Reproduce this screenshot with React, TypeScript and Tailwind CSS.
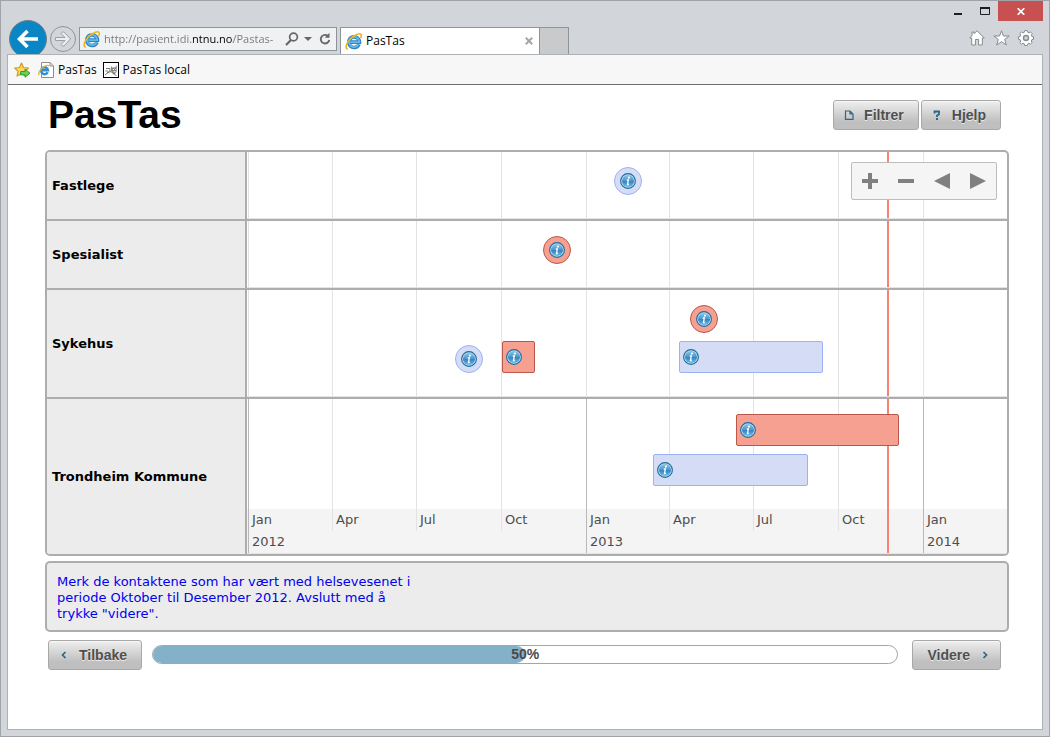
import React from 'react';

type Tone = 'blue' | 'red';

interface TimelineEvent {
  tone: Tone;
  start: number;
  // Events without a length are drawn as round markers
  length?: number;
  top: number;
}

interface TimelineLane {
  name: string;
  height: string;
  events: TimelineEvent[];
  hasAxis?: boolean;
}

// Horizontal values are given on a scale of 760 units for the whole time span
const SPAN = 760;
const TODAY = 640;

const ticks = [
  { at: 1, month: 'Jan', year: '2012' },
  { at: 85, month: 'Apr' },
  { at: 169, month: 'Jul' },
  { at: 254, month: 'Oct' },
  { at: 339, month: 'Jan', year: '2013' },
  { at: 422, month: 'Apr' },
  { at: 506, month: 'Jul' },
  { at: 591, month: 'Oct' },
  { at: 676, month: 'Jan', year: '2014' },
];

const lanes: TimelineLane[] = [
  {
    name: 'Fastlege',
    height: 'h-[69px]',
    events: [{ tone: 'blue', start: 367, top: 15 }],
  },
  {
    name: 'Spesialist',
    height: 'h-[69px]',
    events: [{ tone: 'red', start: 296, top: 15 }],
  },
  {
    name: 'Sykehus',
    height: 'h-[109px]',
    events: [
      { tone: 'red', start: 443, top: 15 },
      { tone: 'blue', start: 208, top: 55 },
      { tone: 'red', start: 255, length: 33, top: 51 },
      { tone: 'blue', start: 432, length: 144, top: 51 },
    ],
  },
  {
    name: 'Trondheim Kommune',
    height: 'h-[155px]',
    hasAxis: true,
    events: [
      { tone: 'red', start: 489, length: 163, top: 15 },
      { tone: 'blue', start: 406, length: 155, top: 55 },
    ],
  },
];

const toneClasses: Record<Tone, string> = {
  blue: 'border-[#9db2f5] bg-[#d5dcf6]',
  red: 'border-[#b9584a] bg-[#f5a091]',
};

const percent = (value: number) => `${(value / SPAN) * 100}%`;

const InfoIcon = () => (
  <svg width="16" height="16" viewBox="0 0 16 16" className="shrink-0">
    <defs>
      <linearGradient id="info-fill" x1="0" y1="0" x2="0" y2="1">
        <stop offset="0" stopColor="#8cc4e4" />
        <stop offset="0.5" stopColor="#4a94cc" />
        <stop offset="0.55" stopColor="#3583c1" />
        <stop offset="1" stopColor="#6cc0ea" />
      </linearGradient>
    </defs>
    <circle cx="8" cy="8" r="7.4" fill="#b9def0" stroke="#1f6a9c" strokeWidth="1.1" />
    <circle cx="8" cy="8" r="6" fill="url(#info-fill)" />
    <circle cx="8.9" cy="4.6" r="1.1" fill="#fff" />
    <path d="M6.8 7H8.3L7.5 11.500H8.800" fill="none" stroke="#fff" strokeWidth="1.3" />
  </svg>
);

const BrowserLogo = ({ size = 17 }: { size?: number }) => (
  <svg width={size} height={size} viewBox="0 0 16 16" className="shrink-0">
    <path
      d="M13.2 10.6A5 5 0 1 1 13.6 8.6H5.2"
      fill="none"
      stroke="#2b83c6"
      strokeWidth="3.4"
    />
    <path
      d="M12.8 10.8A4.8 4.8 0 1 1 13.4 8.5H5"
      fill="none"
      stroke="#63b9ea"
      strokeWidth="1.7"
    />
    <path
      d="M2.6 15.2C-.2 14.6 1 9.6 5 5.6S13.9 -.2 15 1.4C15.5 2.3 15.2 3.7 14.6 4.9"
      fill="none"
      stroke="#f2b51d"
      strokeWidth="1.5"
    />
  </svg>
);

const HomeIcon = () => (
  <svg width="16" height="16" viewBox="0 0 16 16">
    <path
      d="M8 .8L15.3 8H13.3V15H9.6V9.5H6.4V15H2.7V8H.7L3 5.7V2H5V3.7Z"
      fill="#fff"
      stroke="#868b8f"
      strokeLinejoin="round"
    />
  </svg>
);

const StarIcon = () => (
  <svg width="17" height="16" viewBox="0 0 17 16">
    <path
      d="M8.5 .8L10.5 6H16.2L11.7 9.4L13.3 15L8.5 11.7L3.7 15L5.3 9.4L.8 6H6.5Z"
      fill="#fff"
      stroke="#868b8f"
      strokeLinejoin="round"
    />
  </svg>
);

const GearIcon = () => (
  <svg width="16" height="16" viewBox="0 0 16 16">
    <g fill="#fff" stroke="#868b8f" strokeLinejoin="round">
      <path d="M6.7 .6H9.3L9.8 2.4L11 2.9L12.7 2L14.3 3.6L13.3 5.2L13.7 6.3L15.5 6.8V9.3L13.7 9.8L13.2 11L14.2 12.6L12.5 14.2L10.9 13.2L9.8 13.7L9.3 15.5H6.7L6.2 13.7L5.1 13.2L3.5 14.2L1.8 12.6L2.8 11L2.3 9.8L.5 9.3V6.8L2.3 6.3L2.8 5.2L1.8 3.6L3.5 2L5.1 2.9L6.2 2.4Z" />
      <circle cx="8" cy="8" r="2.5" fill="#d2d6da" strokeWidth="1.4" />
    </g>
  </svg>
);

const AddFavoriteIcon = () => (
  <svg width="17" height="16" viewBox="0 0 17 16">
    <path
      d="M7.5 1L9.5 5.5L14.5 6L11 9.3L12 14L7.5 11.6L3 14L4 9.3L.7 6L5.5 5.5Z"
      fill="#fbd75b"
      stroke="#d59a2b"
      strokeWidth="1.2"
      strokeLinejoin="round"
    />
    <path
      d="M6.7 9.5H11V7.2L16 11.2L11 15.2V12.9H6.7Z"
      fill="#6fd04c"
      stroke="#2f9a2f"
      strokeLinejoin="round"
    />
  </svg>
);

const PageLogo = () => (
  <svg width="16" height="16" viewBox="0 0 16 16">
    <path d="M3.5 .5H12L15.5 4V15.500H3.5Z" fill="#fff" stroke="#8d8d8d" />
    <path d="M12 .5V4H15.5" fill="none" stroke="#8d8d8d" />
    <path d="M9.7 10.2A3.5 3.5 0 1 1 10 8.2H3.5" fill="none" stroke="#2f8fd2" strokeWidth="2.4" />
    <path d="M1.3 13.3C-.3 12 2 7 6 4.5C8.5 3 10.8 2.8 10.8 4.6" fill="none" stroke="#f2b51d" strokeWidth="1.3" />
  </svg>
);

const LocalLogo = () => (
  <svg width="16" height="16" viewBox="0 0 16 16">
    <rect x=".5" y=".5" width="15" height="15" fill="#fff" stroke="#000" />
    <path d="M8 4L9.5 5.5H12L13.7 3V9.5L12 12H10L8 9Z" fill="#888" />
    <path d="M2 13L5 10.5L8 9.5L10 11.5L13.5 13.5M3 6.5H7V9L4 11M2.5 9H5" fill="none" stroke="#777" />
    <path d="M10 7.5H11M12 7.5H12.7M10.5 9.7H12.5" stroke="#fff" />
  </svg>
);

interface ActionButtonProps {
  label: string;
  icon: React.ReactNode;
  iconAfter?: boolean;
}

const ActionButton = ({ label, icon, iconAfter }: ActionButtonProps) => (
  <button
    type="button"
    className={`flex h-[30px] shrink-0 items-center gap-2.5 rounded-[3px] border border-[#a8a8a8] bg-linear-to-b from-[#efefef] to-[#bfbfbf] to-75% text-sm font-bold text-[#4f4f4f] shadow-[inset_0_1px_0_#f8f8f8] [text-shadow:0_1px_0_#eeeeee] ${
      iconAfter ? 'flex-row-reverse pr-2.5 pl-3.5' : 'pr-3.5 pl-2.5'
    }`}
  >
    {icon}
    {label}
  </button>
);

const ChevronIcon = ({ d }: { d: string }) => (
  <svg width="10" height="10" viewBox="0 0 10 10">
    <path d={d} fill="none" stroke="#2f6583" strokeWidth="1.7" />
  </svg>
);

const BrowserHeader = () => (
  <header className="flex h-[53px] overflow-hidden pl-2 font-['Open_Sans',sans-serif] text-xs">
    <button
      type="button"
      aria-label="Back"
      className="mt-[19px] flex size-[38px] shrink-0 items-center justify-center rounded-full border border-[#6f7f88] bg-[#0a86c5]"
    >
      <svg width="22" height="20" viewBox="0 0 22 20">
        <path d="M21 10H3M10.5 2L2.500 10L10.5 18" fill="none" stroke="#fff" strokeWidth="3.6" />
      </svg>
    </button>
    <button
      type="button"
      aria-label="Forward"
      className="mt-[25px] ml-[3px] flex size-[26px] shrink-0 items-center justify-center rounded-full border border-[#8f9498]"
    >
      <svg width="18" height="16" viewBox="0 0 18 16">
        <path
          d="M1.5 6.5H11L7 2.5L8.5 1H10L16.5 8L10 15H8.5L7 13.5L11 9.5H1.5Z"
          fill="#eceff1"
          stroke="#9a9fa3"
        />
      </svg>
    </button>
    <div className="mt-[26px] ml-[3px] flex h-6 w-[258px] shrink-0 items-center border border-[#8f9498] bg-[#eff1f3] pr-1 pl-[3px]">
      <BrowserLogo />
      <input
        type="text"
        aria-label="Address"
        defaultValue="http://pasient.idi.ntnu.no/Pastas-"
        className="ml-1 w-0 min-w-0 flex-1 bg-[linear-gradient(90deg,#777777_89px,#000000_89px,#000000_129px,#777777_129px)] bg-clip-text text-[11px] text-transparent outline-none"
      />
      <button type="button" aria-label="Search">
        <svg width="16" height="14" viewBox="0 0 16 14">
          <circle cx="9.5" cy="5" r="3.9" fill="none" stroke="#666" strokeWidth="1.7" />
          <path d="M7 8L2 13" stroke="#666" strokeWidth="2.2" />
        </svg>
      </button>
      <button type="button" aria-label="Show address list" className="ml-1">
        <svg width="8" height="4" viewBox="0 0 8 4">
          <path d="M0 0H8L4 4Z" fill="#666" />
        </svg>
      </button>
      <button type="button" aria-label="Refresh" className="ml-1.5">
        <svg width="14" height="14" viewBox="0 0 14 14">
          <path d="M11.300 8A4.3 4.3 0 1 1 9.5 3.6" fill="none" stroke="#666" strokeWidth="1.8" />
          <path d="M11.5 .8V5.8H6.8Z" fill="#666" />
        </svg>
      </button>
    </div>
    <div className="mt-[26px] ml-[3px] flex w-[200px] shrink-0 items-center border border-b-0 border-[#8f9498] bg-white px-1">
      <BrowserLogo />
      <span className="ml-1 flex-1">PasTas</span>
      <button type="button" aria-label="Close tab" className="mr-0.5">
        <svg width="8" height="8" viewBox="0 0 8 8">
          <path d="M.8 .8L7.2 7.2M7.2 .8L.8 7.2" stroke="#a5a5a5" strokeWidth="2" />
        </svg>
      </button>
    </div>
    <button
      type="button"
      aria-label="New tab"
      className="mt-[26px] w-[29px] shrink-0 border border-b-0 border-l-0 border-[#8f9498] bg-[#c9cacc]"
    />
    <div className="flex flex-1 flex-col items-end">
      <div className="flex h-5 items-center">
        <button type="button" aria-label="Minimize" className="px-2.5 pt-1.5">
          <svg width="8" height="2" viewBox="0 0 8 2">
            <path d="M0 0H8V2H0Z" fill="#1e1e1e" />
          </svg>
        </button>
        <button type="button" aria-label="Maximize" className="px-2">
          <svg width="10" height="8" viewBox="0 0 10 8">
            <path d="M.5 1H9.5V7.5H.5Z" fill="none" stroke="#1e1e1e" />
            <path d="M0 1H10" stroke="#1e1e1e" strokeWidth="2" />
          </svg>
        </button>
        <button
          type="button"
          aria-label="Close"
          className="mr-1.5 flex h-5 w-[45px] items-center justify-center bg-[#c75050]"
        >
          <svg width="8" height="7" viewBox="0 0 8 7">
            <path d="M.7 .2L7.3 6.8M7.3 .2L.7 6.8" stroke="#fff" strokeWidth="1.7" />
          </svg>
        </button>
      </div>
      <div className="mt-[9px] mr-[15px] flex items-center gap-2">
        <button type="button" aria-label="Home">
          <HomeIcon />
        </button>
        <button type="button" aria-label="Favorites">
          <StarIcon />
        </button>
        <button type="button" aria-label="Tools">
          <GearIcon />
        </button>
      </div>
    </div>
  </header>
);

const Lane = ({ lane }: { lane: TimelineLane }) => (
  <div className={`flex ${lane.height}`}>
    <div className="flex w-[200px] shrink-0 items-center border-r-2 border-[#adadad] bg-[#ececec] pl-[5px] font-bold text-black">
      {lane.name}
    </div>
    <div className="relative flex-1 overflow-hidden border-b border-[#e4e4e4]">
      {lane.hasAxis && (
        <div className="absolute inset-x-0 bottom-0 h-11 bg-[#f4f4f4]" />
      )}
      {ticks.map((tick) => (
        <div
          key={tick.at}
          className={`absolute top-0 border-l ${
            lane.hasAxis && tick.year ? 'border-[#b8b8b8]' : 'border-[#e3e3e3]'
          } ${lane.hasAxis && !tick.year ? 'bottom-[22px]' : 'bottom-0'}`}
          style={{ left: percent(tick.at) }}
        >
          {lane.hasAxis && (
            <div className="flex h-full flex-col justify-end pl-[3px] leading-[22px] text-[#4d4d4d]">
              <span>{tick.month}</span>
              {tick.year && <span>{tick.year}</span>}
            </div>
          )}
        </div>
      ))}
      <div
        className="absolute inset-y-0 w-0.5 bg-[#fa8072]"
        style={{ left: percent(TODAY) }}
      />
      {lane.events.map((event) => (
        <button
          key={event.start}
          type="button"
          aria-label={lane.name}
          className={`absolute flex items-center border ${toneClasses[event.tone]} ${
            event.length ? 'h-8 rounded-xs pl-[3px]' : 'size-7 justify-center rounded-full'
          }`}
          style={{
            left: percent(event.start),
            top: event.top,
            width: event.length ? percent(event.length) : undefined,
          }}
        >
          <InfoIcon />
        </button>
      ))}
    </div>
  </div>
);

const zoomControls = [
  { label: 'Zoom in', d: 'M6 0H10V6H16V10H10V16H6V10H0V6H6Z' },
  { label: 'Zoom out', d: 'M0 6H16V10H0Z' },
  { label: 'Move left', d: 'M16 0V16L0 8Z' },
  { label: 'Move right', d: 'M0 0L16 8L0 16Z' },
];

const App: React.FC = () => {
  const progress = 50;

  return (
    <div className="flex min-h-screen flex-col border border-[#a0a4a8] bg-[#d2d6da] text-black">
      <BrowserHeader />

      <div className="mx-1.5 mb-1.5 flex flex-1 flex-col border border-[#adb2b6] bg-white">
        {/* Favorites bar */}
        <nav className="flex h-[30px] items-center border-b border-[#6d6d6d] bg-[#f7f7f7] pl-1.5 font-['Open_Sans',sans-serif] text-xs">
          <button type="button" aria-label="Add to favorites">
            <AddFavoriteIcon />
          </button>
          <a href="#pastas" className="ml-[7px] flex items-center gap-1">
            <PageLogo />
            PasTas
          </a>
          <a href="#local" className="ml-1.5 flex items-center gap-1">
            <LocalLogo />
            PasTas local
          </a>
        </nav>

        <main className="pr-[33px] pb-8 pl-[37px] font-['Liberation_Sans',sans-serif]">
          <div className="flex items-center justify-between pt-[15px] pr-2 pb-5 pl-[3px]">
            <h1 className="text-[39px] leading-[30px] font-bold">PasTas</h1>
            <div className="flex gap-0.5">
              <ActionButton
                label="Filtrer"
                icon={
                  <svg width="10" height="10" viewBox="0 0 10 10">
                    <path
                      d="M1.500 1H6L9 4V9.400H1.500ZM6 1V4H9"
                      fill="none"
                      stroke="#2f6583"
                      strokeWidth="1.2"
                    />
                  </svg>
                }
              />
              <ActionButton
                label="Hjelp"
                icon={
                  <svg width="10" height="10" viewBox="0 0 10 10">
                    <path d="M2.5 3.500V1.500H7V4.2L5 5.500V7" fill="none" stroke="#2f6583" strokeWidth="1.8" />
                    <path d="M4 8H6V10H4Z" fill="#2f6583" />
                  </svg>
                }
              />
            </div>
          </div>

          {/* Timeline */}
          <section className="relative overflow-hidden rounded-[5px] border-2 border-[#adadad] font-['DejaVu_Sans',sans-serif] text-[13px]">
            <div className="divide-y-2 divide-[#adadad]">
              {lanes.map((lane) => (
                <Lane key={lane.name} lane={lane} />
              ))}
            </div>
            <div className="absolute top-2.5 right-2.5 flex h-[38px] items-center gap-5 rounded-xs border border-[#bdbdbd] bg-[#f5f5f5] px-2.5">
              {zoomControls.map((control) => (
                <button key={control.label} type="button" aria-label={control.label}>
                  <svg width="16" height="16" viewBox="0 0 16 16">
                    <path d={control.d} fill="#808080" />
                  </svg>
                </button>
              ))}
            </div>
          </section>

          <p className="mt-[5px] rounded-[5px] border-2 border-[#adadad] bg-[#ececec] px-2.5 pt-[11px] pb-2 font-['DejaVu_Sans',sans-serif] text-[13px] leading-4 text-[#0000ee]">
            Merk de kontaktene som har vært med helsevesenet i
            <br />
            periode Oktober til Desember 2012. Avslutt med å
            <br />
            trykke "videre".
          </p>

          <div className="mt-2 flex pr-2 pl-[3px]">
            <ActionButton label="Tilbake" icon={<ChevronIcon d="M6.5 2L3.5 5L6.5 8" />} />
            <div
              role="progressbar"
              aria-valuenow={progress}
              className="relative mt-[5px] mr-3.5 ml-2.5 h-[19px] flex-1 overflow-hidden rounded-full border border-[#a5a5a5] bg-white"
            >
              <div
                className="h-full rounded-r-full bg-[#84b1ca]"
                style={{ width: `${progress}%` }}
              />
              <span className="absolute inset-0 text-center text-sm leading-[17px] font-bold text-[#4a4a4a]">
                {progress}%
              </span>
            </div>
            <ActionButton
              label="Videre"
              icon={<ChevronIcon d="M3.5 2L6.5 5L3.5 8" />}
              iconAfter
            />
          </div>
        </main>
      </div>
    </div>
  );
};

export default App;
